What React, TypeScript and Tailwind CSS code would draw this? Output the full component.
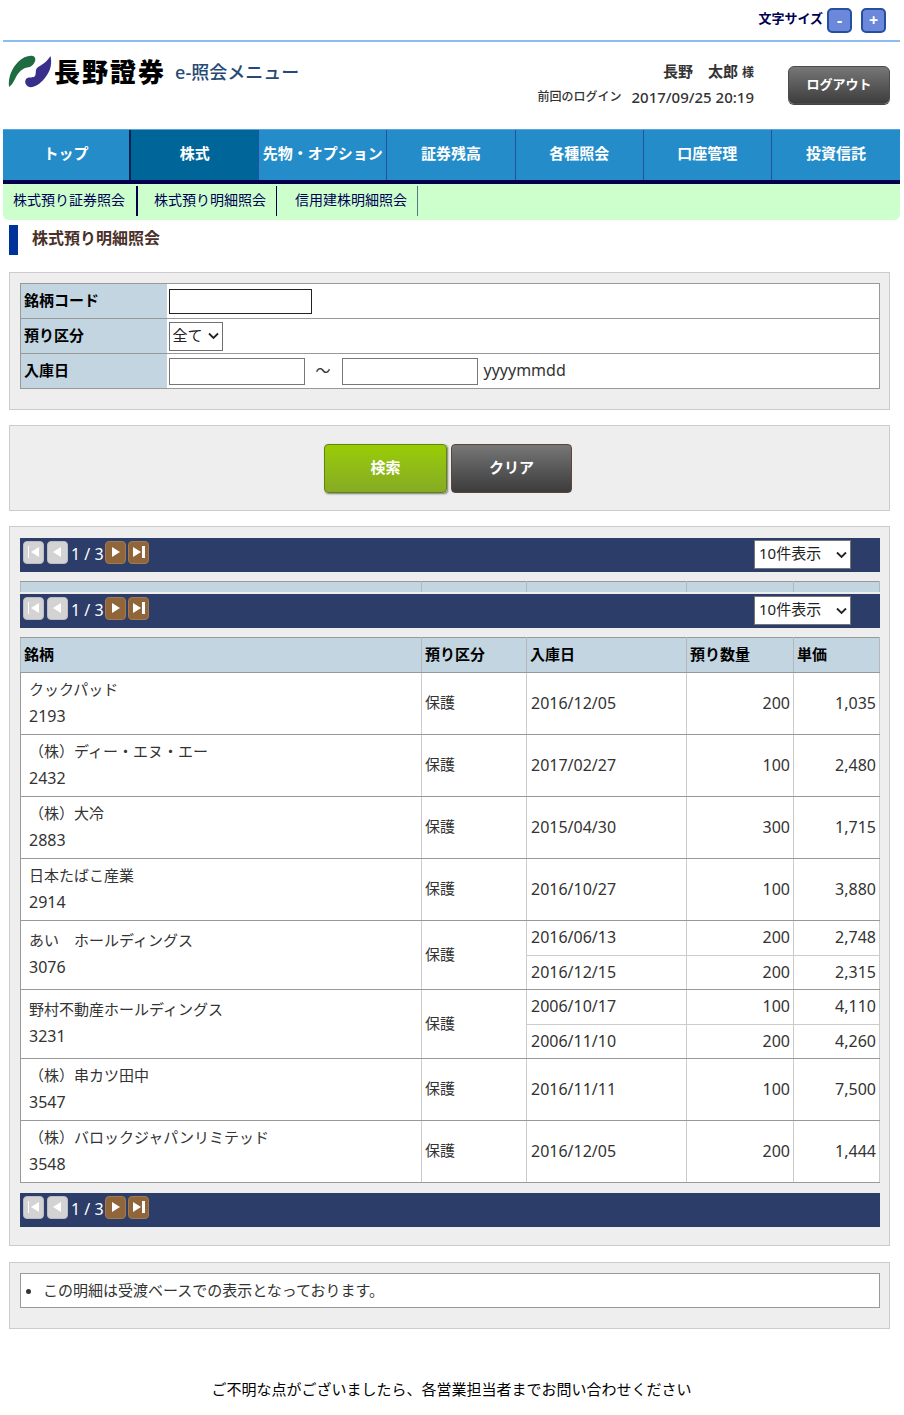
import React from 'react';

type Lot = { date: string; quantity: string; price: string };
type Holding = { name: string; code: string; lots: Lot[] };

const navItems = ['トップ', '株式', '先物・オプション', '証券残高', '各種照会', '口座管理', '投資信託'];
const subItems = ['株式預り証券照会', '株式預り明細照会', '信用建株明細照会'];

const holdings: Holding[] = [
  { name: 'クックパッド', code: '2193', lots: [{ date: '2016/12/05', quantity: '200', price: '1,035' }] },
  { name: '（株）ディー・エヌ・エー', code: '2432', lots: [{ date: '2017/02/27', quantity: '100', price: '2,480' }] },
  { name: '（株）大冷', code: '2883', lots: [{ date: '2015/04/30', quantity: '300', price: '1,715' }] },
  { name: '日本たばこ産業', code: '2914', lots: [{ date: '2016/10/27', quantity: '100', price: '3,880' }] },
  {
    name: 'あい　ホールディングス',
    code: '3076',
    lots: [
      { date: '2016/06/13', quantity: '200', price: '2,748' },
      { date: '2016/12/15', quantity: '200', price: '2,315' },
    ],
  },
  {
    name: '野村不動産ホールディングス',
    code: '3231',
    lots: [
      { date: '2006/10/17', quantity: '100', price: '4,110' },
      { date: '2006/11/10', quantity: '200', price: '4,260' },
    ],
  },
  { name: '（株）串カツ田中', code: '3547', lots: [{ date: '2016/11/11', quantity: '100', price: '7,500' }] },
  { name: '（株）バロックジャパンリミテッド', code: '3548', lots: [{ date: '2016/12/05', quantity: '200', price: '1,444' }] },
];

function Logo() {
  return (
    <svg width="44" height="34" viewBox="0 0 44 34" aria-hidden="true">
      <path
        d="M1 32C0 22 4 13 10 7C15 2 21 0 25 1C28 2 28 6 25.500 9C23.500 12 20 12.500 17 13C12 15 9 20 7.500 23C5.500 27 4 30 1 32Z"
        fill="#1f6b42"
      />
      <path
        d="M42.500 1C44 8 43 15 38 21.500C34 27 29 31.500 23 32.200C18 32 15.500 27 18.500 23.500C21 21.500 25 23.500 27 21C28.500 18 27 16 29 13C33 10 39 7 42.500 1Z"
        fill="#382f8c"
      />
    </svg>
  );
}

function Chevron() {
  return (
    <svg
      className="pointer-events-none absolute right-1 top-1/2 -translate-y-1/2"
      width="11"
      height="8"
      viewBox="0 0 11 8"
      aria-hidden="true"
    >
      <path d="M1 1.500L5.500 6L10 1.500" fill="none" stroke="#222222" strokeWidth="1.800" />
    </svg>
  );
}

type PageButtonProps = { label: string; forward?: boolean; edge?: boolean };

function PageButton({ label, forward = false, edge = false }: PageButtonProps) {
  return (
    <button
      type="button"
      aria-label={label}
      className={
        forward
          ? 'flex h-[23px] w-[21px] items-start justify-center rounded-sm border border-[#a07a50] bg-[#8f6539] pt-[2px]'
          : 'flex h-[23px] w-[21px] items-start justify-center rounded-sm border border-[#bcbcc4] bg-[#d3d3d3] pt-[2px]'
      }
    >
      <svg width="17" height="16" viewBox="0 0 17 16" aria-hidden="true" className={forward ? 'shrink-0' : 'shrink-0 rotate-180'}>
        {edge ? (
          <>
            <path d="M3 3V13L11 8Z" fill="#ffffff" />
            <path d={forward ? 'M12 2H15V14H12Z' : 'M13 2H14V14H13Z'} fill="#ffffff" />
          </>
        ) : (
          <path d="M5 3V13L13 8Z" fill="#ffffff" />
        )}
      </svg>
    </button>
  );
}

function Pager({ withSize = false }: { withSize?: boolean }) {
  return (
    <div className="flex h-[34px] items-start justify-between bg-[#2d3d69] pl-[3px] pr-[29px]">
      <div className="flex items-start pt-[3px]">
        <PageButton label="最初のページ" edge />
        <span className="w-[3px]" />
        <PageButton label="前のページ" />
        <span className="w-[37px] pl-[3px] text-base leading-[26px] text-white">1 / 3</span>
        <PageButton label="次のページ" forward />
        <span className="w-[2px]" />
        <PageButton label="最後のページ" forward edge />
      </div>
      {withSize && (
        <div className="relative mt-[2px]">
          <select
            aria-label="表示件数"
            className="block h-[29px] w-[97px] appearance-none border border-[#777777] bg-white pb-[2px] pl-1 text-[15px] text-[#222222]"
          >
            <option>10件表示</option>
          </select>
          <Chevron />
        </div>
      )}
    </div>
  );
}

function Columns() {
  return (
    <colgroup>
      <col />
      <col className="w-[105px]" />
      <col className="w-[160px]" />
      <col className="w-[107px]" />
      <col className="w-[86px]" />
    </colgroup>
  );
}

const headings = ['銘柄', '預り区分', '入庫日', '預り数量', '単価'];

function HeadRow({ behind = false }: { behind?: boolean }) {
  return (
    <thead>
      <tr className="h-[35px] bg-[#c2d5e0] text-[15px] text-black">
        {headings.map((heading) => (
          <th
            key={heading}
            className={
              behind
                ? 'border border-x-[#b3b8bb] border-y-[#999999] px-[3px] pb-0 pt-px text-left font-normal text-[#444444]'
                : 'border border-x-[#b3b8bb] border-y-[#999999] px-[3px] pb-[2px] pt-0 text-left font-bold'
            }
          >
            {heading}
          </th>
        ))}
      </tr>
    </thead>
  );
}

const tableClass = 'w-full table-fixed border-collapse border border-[#999999] bg-white text-[#333333]';

function HoldingsTable() {
  return (
    <table className={tableClass}>
      <Columns />
      <HeadRow />
      <tbody>
        {holdings.map((h) =>
          h.lots.map((lot, i) => {
            const split = h.lots.length > 1;
            const height = !split ? 'h-[62px]' : i === 0 ? 'h-[35px]' : 'h-[34px]';
            const line = i === h.lots.length - 1 ? 'border-b-[#999999]' : 'border-b-[#cccccc]';
            const cell = `border-b border-r border-r-[#cccccc] pb-[2px] pt-0 text-base leading-6 ${line}`;
            return (
              <tr key={h.code + lot.date} className={height}>
                {i === 0 && (
                  <>
                    <td rowSpan={h.lots.length} className="border-b border-r border-b-[#999999] border-r-[#cccccc] pb-[2px] pl-2 pt-0">
                      <div className="text-[15px] leading-[27px]">{h.name}</div>
                      <div className="text-base leading-[27px]">{h.code}</div>
                    </td>
                    <td rowSpan={h.lots.length} className="border-b border-r border-b-[#999999] border-r-[#cccccc] px-[3px] pb-[2px] pt-0 text-[15px]">
                      保護
                    </td>
                  </>
                )}
                <td className={`${cell} pl-1`}>{lot.date}</td>
                <td className={`${cell} pr-[3px] text-right`}>{lot.quantity}</td>
                <td className={`${cell} pr-[3px] text-right`}>{lot.price}</td>
              </tr>
            );
          }),
        )}
      </tbody>
    </table>
  );
}

const panel = 'border border-[#cccccc] bg-[#eeeeee]';
const filterHead = 'w-[146px] bg-[#c2d5e0] px-[3px] pb-[2px] pt-0 text-left text-[15px] font-bold text-black';
const zoomButton =
  'flex h-[25px] w-[25px] items-center justify-center rounded-[5px] border-2 border-[#2450a0] bg-[#6b88da] pb-[2px] text-base font-bold leading-none text-white';

export default function App() {
  return (
    <div className="bg-white pl-[3px] pr-1 font-['Noto_Sans','Noto_Sans_CJK_JP',sans-serif] text-[15px] text-[#333333]">
      <div className="flex h-[42px] items-start justify-end border-b-2 border-[#8bbdf5] pr-[14px] pt-2">
        <span className="mr-1 text-[13px] font-bold leading-5 text-[#000055]">文字サイズ</span>
        <button type="button" aria-label="文字を小さく" className={zoomButton}>
          -
        </button>
        <button type="button" aria-label="文字を大きく" className={`${zoomButton} ml-[9px]`}>
          +
        </button>
      </div>

      <header className="flex h-[87px] items-start justify-between pl-[5px] pr-[10px]">
        <div className="flex items-center pt-3">
          <Logo />
          <span className="ml-[2px] flex gap-[2px] text-[26px] font-black leading-9 text-black">
            <span>長</span>
            <span>野</span>
            <span>證</span>
            <span>券</span>
          </span>
          <span className="ml-[11px] text-lg font-medium text-[#254a75]">e-照会メニュー</span>
        </div>
        <div className="flex items-start gap-[34px]">
          <div className="pt-4 text-right">
            <div className="leading-[26px]">
              <span className="text-[15px] font-bold">長野　太郎</span>
              <span className="ml-1 text-xs font-bold">様</span>
            </div>
            <div className="flex items-center justify-end gap-[10px] leading-[26px]">
              <span className="text-xs font-medium">前回のログイン</span>
              <span className="text-[15px] font-medium">2017/09/25 20:19</span>
            </div>
          </div>
          <button
            type="button"
            className="mt-6 h-[38px] w-[102px] rounded-md border border-[#4b4b4b] bg-linear-to-b from-[#777777] to-[#3e3e3e] text-[13px] font-bold text-white shadow-[0_1px_0_#444444]"
          >
            ログアウト
          </button>
        </div>
      </header>

      <nav>
        <div className="grid h-[55px] grid-cols-7 border-b-4 border-t border-b-[#00004d] border-t-[#5ba3dc] bg-[#248dc9]">
          {navItems.map((item, i) => (
            <a
              key={item}
              href="#"
              className={
                i === 1
                  ? 'flex items-center justify-center whitespace-nowrap border-r border-[#2450a0] bg-[#006699] pb-[3px] text-[15px] font-bold text-white'
                  : i === 0
                    ? 'flex items-center justify-center whitespace-nowrap border-r-2 border-[#00204d] pb-[3px] text-[15px] font-bold text-white'
                    : 'flex items-center justify-center whitespace-nowrap border-r border-[#2450a0] pb-[3px] text-[15px] font-bold text-white last:border-r-0'
              }
            >
              {item}
            </a>
          ))}
        </div>
        <div className="flex h-9 items-start rounded-b-md bg-[#ccffcc] pt-[2px]">
          {subItems.map((item, i) => (
            <a
              key={item}
              href="#"
              className={
                i === 0
                  ? 'h-[30px] w-[135px] border-r-2 border-[#00004d] pl-[10px] text-sm leading-7 text-[#000055]'
                  : i === 1
                    ? 'h-[30px] w-[139px] border-r border-[#00004d] pl-4 text-sm leading-7 text-[#000055]'
                    : 'h-[30px] w-[141px] border-r border-[#557788] pl-[18px] text-sm leading-7 text-[#000055]'
              }
            >
              {item}
            </a>
          ))}
        </div>
      </nav>

      <main className="pl-[6px] pr-[10px] pt-[5px]">
        <h1 className="h-[30px] border-l-[9px] border-[#003399] pl-[14px] text-base font-bold leading-[26px] text-[#4a3028]">
          株式預り明細照会
        </h1>

        <form onSubmit={(e) => e.preventDefault()}>
          <section className={`${panel} mt-[17px] pb-5 pl-[10px] pr-[9px] pt-[10px]`}>
            <table className="w-full border-collapse border border-[#999999] bg-white">
              <tbody>
                <tr className="h-[35px] border-b border-[#999999]">
                  <th className={filterHead}>
                    <label htmlFor="code">銘柄コード</label>
                  </th>
                  <td className="px-[2px] py-0">
                    <input id="code" type="text" className="block h-[25px] w-[143px] border border-[#222222] bg-white px-1" />
                  </td>
                </tr>
                <tr className="h-[35px] border-b border-[#999999]">
                  <th className={filterHead}>
                    <label htmlFor="kind">預り区分</label>
                  </th>
                  <td className="px-[2px] py-0">
                    <div className="relative w-[54px]">
                      <select id="kind" className="block h-[29px] w-full appearance-none border border-[#707070] bg-white pb-[2px] pl-[3px] text-[15px] text-[#222222]">
                        <option>全て</option>
                      </select>
                      <Chevron />
                    </div>
                  </td>
                </tr>
                <tr className="h-[35px]">
                  <th className={filterHead}>
                    <label htmlFor="from">入庫日</label>
                  </th>
                  <td className="px-[2px] py-0">
                    <div className="flex items-center">
                      <input id="from" type="text" className="h-[27px] w-[136px] border border-[#777777] bg-white px-1" />
                      <span className="w-[37px] pb-[2px] text-center">～</span>
                      <input aria-label="入庫日（終了）" type="text" className="h-[27px] w-[136px] border border-[#777777] bg-white px-1" />
                      <span className="ml-[6px] pb-[2px] text-base">yyyymmdd</span>
                    </div>
                  </td>
                </tr>
              </tbody>
            </table>
          </section>

          <section className={`${panel} mt-[15px] flex h-[86px] items-start justify-center gap-1 pr-[3px] pt-[18px]`}>
            <button
              type="submit"
              className="h-[49px] w-[123px] rounded-sm border border-[#5f8512] bg-linear-to-b from-[#99cc00] to-[#86ab22] pb-[3px] text-[15px] font-bold text-white shadow-[1px_1px_2px_#777777]"
            >
              検索
            </button>
            <button
              type="reset"
              className="h-[49px] w-[121px] rounded-sm border border-[#5f4535] bg-linear-to-b from-[#777777] to-[#3c3c3c] pb-[3px] text-[15px] font-bold text-white"
            >
              クリア
            </button>
          </section>
        </form>

        <section className={`${panel} mt-[15px] pb-[18px] pl-[10px] pr-[9px] pt-[11px]`}>
          <Pager withSize />
          <div aria-hidden="true" className="mt-[9px] h-[11px] overflow-hidden">
            <table className={tableClass}>
              <Columns />
              <HeadRow behind />
            </table>
          </div>
          <div className="mt-[2px]">
            <Pager withSize />
          </div>
          <div className="mb-[10px] mt-[9px]">
            <HoldingsTable />
          </div>
          <Pager />
        </section>

        <section className={`${panel} mt-4 pb-5 pl-[10px] pr-[9px] pt-[10px]`}>
          <ul className="list-disc border border-[#999999] bg-white pl-[22px] leading-[33px]">
            <li>この明細は受渡ベースでの表示となっております。</li>
          </ul>
        </section>
      </main>

      <footer className="pb-3 pt-[47px] text-center leading-[26px] text-black">
        ご不明な点がございましたら、各営業担当者までお問い合わせください
      </footer>
    </div>
  );
}
